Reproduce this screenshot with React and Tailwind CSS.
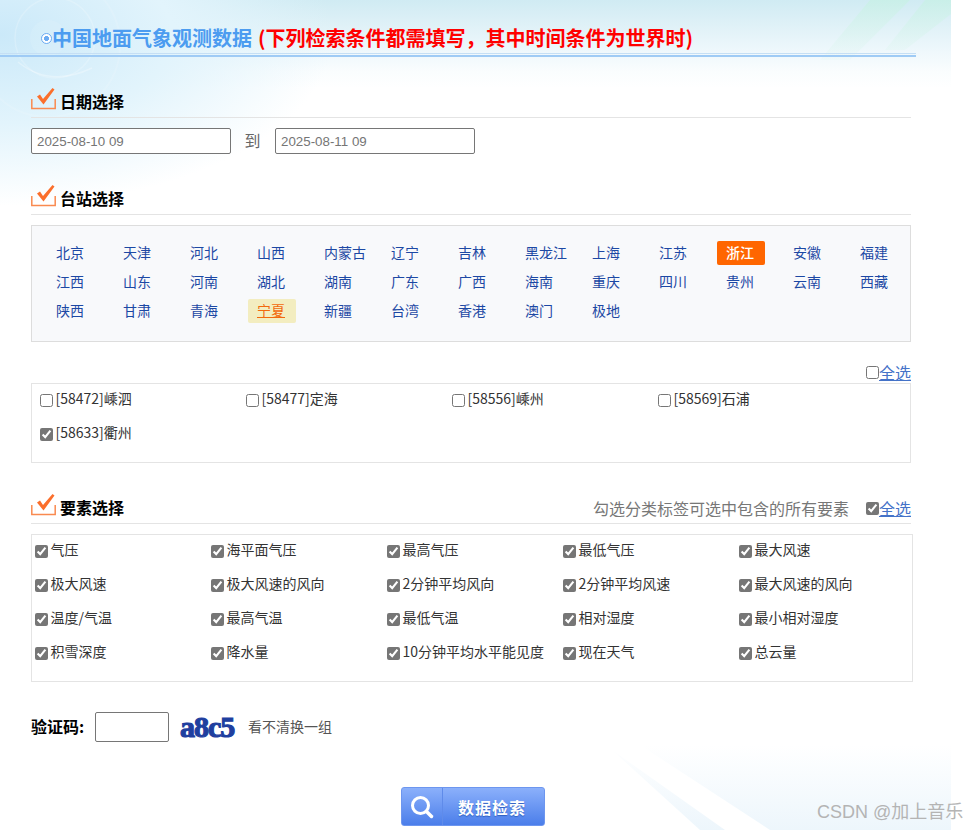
import React from "react";

const cjk = "font-['Noto_Sans_CJK_SC','Microsoft_YaHei',sans-serif]";

const provinces = ["北京","天津","河北","山西","内蒙古","辽宁","吉林","黑龙江","上海","江苏","浙江","安徽","福建","江西","山东","河南","湖北","湖南","广东","广西","海南","重庆","四川","贵州","云南","西藏","陕西","甘肃","青海","宁夏","新疆","台湾","香港","澳门","极地"];
const stations = [["[58472]嵊泗",false],["[58477]定海",false],["[58556]嵊州",false],["[58569]石浦",false],["[58633]衢州",true]];
const elements = ["气压","海平面气压","最高气压","最低气压","最大风速","极大风速","极大风速的风向","2分钟平均风向","2分钟平均风速","最大风速的风向","温度/气温","最高气温","最低气温","相对湿度","最小相对湿度","积雪深度","降水量","10分钟平均水平能见度","现在天气","总云量"];

function TickIcon() {
  return (
    <svg width="25" height="23" viewBox="0 0 25 23" className="block shrink-0">
      <path d="M0.8 12 V21.5 H24.2 V12" fill="none" stroke="#f98a50" strokeWidth="1.5" />
      <path d="M6 9.5 L9 7.5 L12 12 L21.5 1 L23.5 2.5 L12.5 17.5 Z" fill="#fb6f2c" />
    </svg>
  );
}

function SectionHeader({ title, children }) {
  return (
    <div className="mt-[30px] flex h-[31px] w-[880px] items-end justify-between border-b border-[#e4e4e4]">
      <div className="flex h-[30px] items-start">
        <TickIcon />
        <span className="ml-[4px] mt-[2px] text-[16px] leading-[24px] font-bold text-black">{title}</span>
      </div>
      {children}
    </div>
  );
}

function Check({ checked, shift }) {
  return <input type="checkbox" defaultChecked={checked} className={`m-0 h-[13px] w-[13px] shrink-0 accent-[#767676] ${shift ? "translate-y-[1px]" : ""}`} />;
}

function Item({ label, checked }) {
  return (
    <label className="flex h-[20px] items-center gap-[3px] text-[14px] leading-[20px] whitespace-nowrap text-[#333333]">
      <Check checked={checked} shift />
      <span className="-translate-y-[1px] -translate-x-[0.5px]">{label}</span>
    </label>
  );
}

function SelectAll({ checked }) {
  return (
    <span className="flex items-center">
      <Check checked={checked} />
      <a className="-translate-y-[1px] text-[16px] leading-[20px] text-[#4472c8] underline underline-offset-1">全选</a>
    </span>
  );
}

export default function App() {
  return (
    <div className={`relative h-[830px] w-[967px] overflow-hidden bg-white ${cjk}`}>
      <div className="absolute inset-y-0 left-0 w-[951px] bg-[linear-gradient(180deg,#d0ebf3_0,#dff1f7_25px,#eff8fc_52px,#fafdfe_72px,#ffffff_88px)]" />
      <div className="absolute left-0 top-0 h-[230px] w-[380px] bg-[radial-gradient(ellipse_at_0%_15%,#cbe9f9_0,#e2f4fc_32%,#f4fbfe00_62%)]" />
      <svg className="absolute left-0 top-0" width="951" height="830" viewBox="0 0 951 830" fill="none">
        <defs>
          <linearGradient id="gb" x1="0" y1="745" x2="0" y2="830" gradientUnits="userSpaceOnUse">
            <stop offset="0" stopColor="#edf6fc" stopOpacity="0" />
            <stop offset="1" stopColor="#edf6fc" stopOpacity="1" />
          </linearGradient>
          <linearGradient id="gt" x1="0" y1="0" x2="0" y2="80" gradientUnits="userSpaceOnUse">
            <stop offset="0" stopColor="#c8f0e6" stopOpacity="0.8" />
            <stop offset="1" stopColor="#e8f8f4" stopOpacity="0" />
          </linearGradient>
        </defs>
        <circle cx="55" cy="38" r="40" stroke="#ffffff" strokeOpacity="0.2" strokeWidth="1.5" />
        <circle cx="48" cy="45" r="72" stroke="#ffffff" strokeOpacity="0.12" strokeWidth="2" />
        <circle cx="48" cy="38" r="18" fill="#ffffff" fillOpacity="0.1" />
        <path d="M18 62 Q50 88 92 68" stroke="#ffffff" strokeOpacity="0.3" strokeWidth="1.5" />
        <path d="M820 60 L870 0 H910 L850 60 Z" fill="url(#gt)" />
        <path d="M885 50 L925 0 H951 V14 L905 50 Z" fill="url(#gt)" />
        <path d="M640 745 L770 830 H951 V745 Z" fill="url(#gb)" />
        <path d="M612 750 L700 830 H725 Z" fill="url(#gb)" />
      </svg>

      <div className="relative pl-[31px]">
        <div className="-ml-[31px] h-[57px] w-[916px]">
          <div className="flex h-[53px] items-center pl-[41px] pt-[23px] text-[20px] leading-[30px] font-bold whitespace-nowrap">
            <span className="h-[11px] w-[11px] rounded-full border-[1.5px] border-[#6dacf2] bg-[radial-gradient(circle,#6dacf2_0,#6dacf2_35%,#ffffff_40%)]" />
            <span className="text-[#4c9cf0]">中国地面气象观测数据</span>
            <span className="ml-[6px] text-[#ff0000]">(下列检索条件都需填写，其中时间条件为世界时)</span>
          </div>
          <div className="h-[1px] bg-[#c5dff5]" />
          <div className="mt-[1px] h-[2px] bg-[#9fcbf5]" />
        </div>

        <SectionHeader title="日期选择" />
        <div className="mt-[10px] flex h-[26px] items-center">
          <input defaultValue="2025-08-10 09" className="h-[26px] w-[200px] rounded-[2px] border border-[#767676] bg-white pl-[5px] font-['Liberation_Sans',sans-serif] text-[13.333px] text-[#757575]" />
          <span className="w-[44px] -translate-y-[1px] text-center text-[16px] -translate-x-[0.5px] text-[#666666]">到</span>
          <input defaultValue="2025-08-11 09" className="h-[26px] w-[200px] rounded-[2px] border border-[#767676] bg-white pl-[5px] font-['Liberation_Sans',sans-serif] text-[13.333px] text-[#757575]" />
        </div>

        <SectionHeader title="台站选择" />
        <div className="mt-[10px] h-[117px] w-[880px] border border-[#dddddd] bg-[#f8f9fb] pl-[15px] pt-[15px]">
          <div className="grid grid-cols-[repeat(13,48px)] auto-rows-[24px] gap-x-[19px] gap-y-[5px]">
            {provinces.map((p) => {
              const active = p === "浙江";
              const hover = p === "宁夏";
              return (
                <a key={p} className={`rounded-[2px] pl-[9px] text-[14px] leading-[22px] whitespace-nowrap ${active ? "bg-[#ff6600] font-medium text-white" : hover ? "bg-[#f3edc0] text-[#f2690d] underline" : "text-[#1c48a4]"}`}>{p}</a>
              );
            })}
          </div>
        </div>

        <div className="mt-[20px] flex h-[21px] w-[880px] items-center justify-end">
          <SelectAll checked={false} />
        </div>
        <div className="h-[80px] w-[880px] border border-[#e4e4e4] bg-white pl-[8px] pt-[5px]">
          <div className="grid grid-cols-[repeat(4,206px)] gap-y-[14px]">
            {stations.map(([s, c]) => <Item key={s} label={s} checked={c} />)}
          </div>
        </div>

        <SectionHeader title="要素选择">
          <div className="flex h-[30px] items-center pt-[1px]">
            <span className="mr-[17px] -translate-y-[1px] text-[16px] text-[#777777]">勾选分类标签可选中包含的所有要素</span>
            <SelectAll checked={true} />
          </div>
        </SectionHeader>
        <div className="mt-[10px] h-[148px] w-[882px] border border-[#e4e4e4] bg-white pl-[3px] pt-[5px]">
          <div className="grid grid-cols-[repeat(5,176px)] gap-y-[14px]">
            {elements.map((e) => <Item key={e} label={e} checked={true} />)}
          </div>
        </div>

        <div className="mt-[30px] flex h-[30px] items-center">
          <span className="w-[64px] -translate-y-[1px] text-[16px] font-bold text-black">验证码:</span>
          <input className="h-[30px] w-[74px] rounded-[2px] border border-[#767676] bg-white" />
          <span className="ml-[11px] w-[68px] font-['Liberation_Serif',serif] text-[30px] leading-[30px] font-bold tracking-[-1px] text-[#1f3f9f] [-webkit-text-stroke:1.2px_#1f3f9f]">a8c5</span>
          <a className="-translate-y-[1px] text-[14px] text-[#555555]">看不清换一组</a>
        </div>

        <div className="ml-[370px] mt-[45px] flex h-[39px] w-[144px] items-center rounded-[3px] border border-[#6d96ef] bg-[linear-gradient(180deg,#8bb0fb_0,#4b7eea_100%)]">
          <div className="flex h-full w-[41px] items-center justify-center border-r border-[#5f8bea]">
            <svg width="24" height="24" viewBox="0 0 24 24" fill="none" stroke="#ffffff">
              <circle cx="10.5" cy="10.5" r="8" strokeWidth="3" />
              <path d="M16.5 16.5 L21.5 21.5" strokeWidth="3.5" strokeLinecap="round" />
            </svg>
          </div>
          <span className="ml-[15px] text-[16px] font-bold tracking-[1px] text-white [text-shadow:0_1px_1px_#2f5fc0]">数据检索</span>
        </div>
      </div>

      <span className="absolute left-[817px] top-[801px] font-['Liberation_Sans','Noto_Sans_CJK_SC',sans-serif] text-[18px] leading-[22px] whitespace-nowrap text-[#b4b4b4]">CSDN @加上音乐</span>
    </div>
  );
}
